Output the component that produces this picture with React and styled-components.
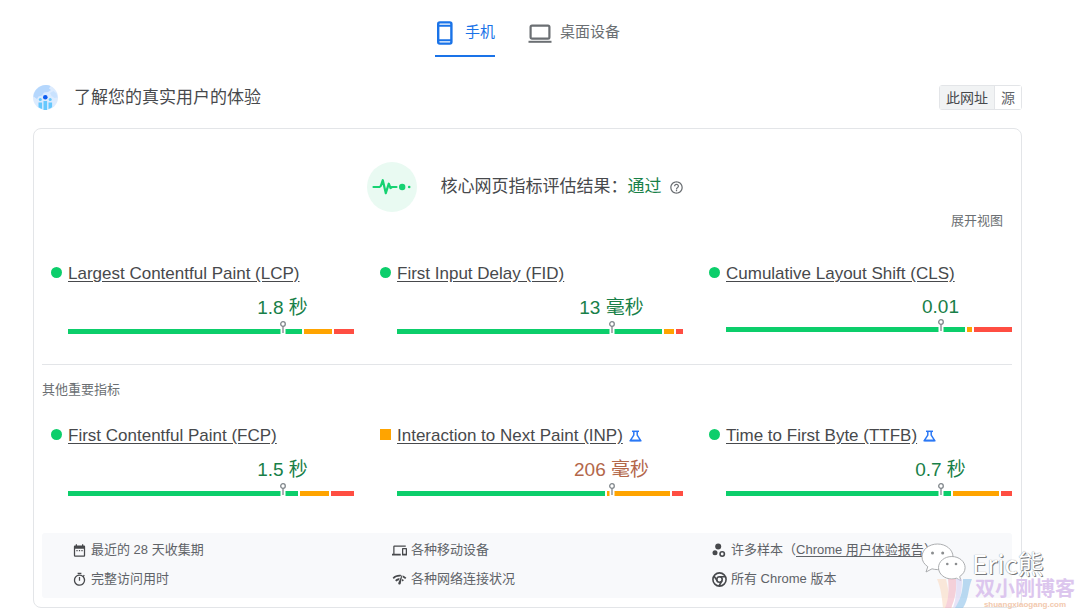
import React, { useState } from "react";
import styled, { createGlobalStyle } from "styled-components";
import {
  MdDateRange,
  MdDevices,
  MdHelpOutline,
  MdNetworkCheck,
  MdOutlineTimer,
} from "react-icons/md";

const coreMetrics = [
  { name: "Largest Contentful Paint (LCP)", value: "1.8 秒", parts: [236, 28, 20] },
  { name: "First Input Delay (FID)", value: "13 毫秒", parts: [267, 10, 7] },
  { name: "Cumulative Layout Shift (CLS)", value: "0.01", parts: [239, 5, 38], unitless: true },
];

const otherMetrics = [
  { name: "First Contentful Paint (FCP)", value: "1.5 秒", parts: [230, 29, 23] },
  {
    name: "Interaction to Next Paint (INP)",
    value: "206 毫秒",
    parts: [208, 63, 11],
    average: true,
    experimental: true,
  },
  {
    name: "Time to First Byte (TTFB)",
    value: "0.7 秒",
    parts: [225, 46, 11],
    experimental: true,
  },
];

const partColors = ["#0cce6b", "#ffa400", "#ff4e42"];

const PhoneIcon = () => (
  <svg width="20" height="24" viewBox="0 0 20 24" fill="none" stroke="currentColor">
    <rect x="3.2" y="1.4" width="13.2" height="21.2" rx="1.6" strokeWidth="2.4" />
    <path d="M3 4.700h13.400M3 19.300h13.400" strokeWidth="2" />
  </svg>
);

const LaptopIcon = () => (
  <svg width="24" height="24" viewBox="0 0 24 24" fill="none" stroke="currentColor">
    <rect x="2.6" y="4.600" width="18.800" height="13" rx="1.400" strokeWidth="2.200" />
    <path d="M.5 20.800h23" strokeWidth="2" />
  </svg>
);

const UsersIcon = () => (
  <svg width="25" height="25" viewBox="0 0 25 25">
    <circle cx="12.5" cy="12.5" r="12.5" fill="#dcebfe" />
    <path
      d="M1 8.500C3 3.500 7.500.3 12.500 0c2 .1 3.500.4 5 1l-1.500 2.500 2 1.500-3 2-4 .5-2 3-3.500 1L4 14 .4 11.500z"
      fill="#b5d7fd"
    />
    <path d="M17 8l3.500-2 3 2.500 1 4-3 .5-3-2z" fill="#c9e2fe" />
    <g fill="#66c8fd">
      <circle cx="7.300" cy="14.500" r="1.500" />
      <circle cx="17.200" cy="14.500" r="1.500" />
      <path d="M5.500 17.500h3.600v6.600a12.500 12.500 0 0 1-3.600-1.800z" />
      <path d="M10.500 16h3.600v8.900a12.500 12.500 0 0 1-3.600 0z" />
      <path d="M15.500 17.500h3.600v4.800a12.500 12.500 0 0 1-3.600 1.800z" />
    </g>
    <circle cx="12.300" cy="12.300" r="2.300" fill="#0b5cf0" />
  </svg>
);

const PulseIcon = () => (
  <svg width="50" height="50" viewBox="0 0 50 50">
    <circle cx="25" cy="25" r="25" fill="#e9faf2" />
    <path
      d="M6.500 25h6l1.300-1 2-5.800 3 13 3-9.500 1.700 4.300 1.500-1h4.500"
      fill="none"
      stroke="#16d272"
      strokeWidth="2.200"
      strokeLinecap="round"
      strokeLinejoin="round"
    />
    <circle cx="35.200" cy="25" r="3.200" fill="#16d272" />
    <circle cx="42.200" cy="25" r="1.300" fill="#16d272" />
  </svg>
);

const FlaskIcon = () => (
  <svg width="13" height="12" viewBox="0 0 13 12" fill="none" stroke="#2b78f5">
    <path d="M3 1.300h7" strokeWidth="1.500" />
    <path d="M4.800 1.500v3.600L1.300 10.600h10.400L8.200 5.100V1.500" strokeWidth="1.500" />
    <path d="M1.200 10.600h10.600" strokeWidth="1.800" />
  </svg>
);

const PinIcon = () => (
  <svg width="7" height="13" viewBox="0 0 7 13" fill="none" stroke="#80868b">
    <circle cx="3.500" cy="3" r="2.300" strokeWidth="1.300" fill="#fff" />
    <path d="M3.500 5.200V12" strokeWidth="1.300" />
  </svg>
);

const SamplesIcon = () => (
  <svg width="15" height="15" viewBox="0 0 15 15" fill="currentColor">
    <circle cx="6.200" cy="3.500" r="3" />
    <circle cx="3" cy="9.700" r="2.500" />
    <circle cx="10.200" cy="11" r="2.200" fill="none" stroke="currentColor" strokeWidth="1.600" />
  </svg>
);

const ChromeIcon = () => (
  <svg width="15" height="15" viewBox="0 0 15 15" fill="none" stroke="currentColor" strokeWidth="1.600">
    <circle cx="7.500" cy="7.500" r="6.600" />
    <circle cx="7.500" cy="7.500" r="2.700" />
    <path d="M7.500 4.800h6M5.200 8.900L2 4M9.800 8.900L7 14" />
  </svg>
);

const WechatIcon = () => (
  <svg width="46" height="40" viewBox="0 0 46 40" fill="#fff" stroke="#a3a5a7" strokeWidth="0.900">
    <path d="M16.500 1C7.800 1 1 6.700 1 13.800c0 4.100 2.200 7.500 5.800 9.900L5 29l6-3.200c1.900.5 3.500.8 5.500.8 8.600 0 15.500-5.700 15.500-12.800S25.100 1 16.500 1z" />
    <path d="M30.800 13.500c-7.400 0-13.300 5-13.300 11.200S23.400 36 30.800 36c1.500 0 3.100-.3 4.600-.8l4.500 2.500-1.200-4.200c3.300-2.100 5.400-5.200 5.400-8.800 0-6.200-6-11.200-13.300-11.200z" />
    <g fill="#8b8d8f" stroke="none">
      <circle cx="11.500" cy="10" r="1.500" />
      <circle cx="21.700" cy="10" r="1.500" />
      <circle cx="26.300" cy="21" r="1.300" />
      <circle cx="35" cy="21" r="1.300" />
    </g>
  </svg>
);

const BlogLogo = () => (
  <svg width="36" height="32" viewBox="0 0 36 32" opacity="0.600">
    <path d="M0 1h9l6 29H6C5 20 4 10 0 1z" fill="#fbdcc4" />
    <path d="M11 1h8c1 10-1 21-5 29H8c4-9 4-20 3-29z" fill="#f3b5c4" />
    <path d="M19 1h6c0 10-1 20-6 29h-3c3-9 4-19 3-29z" fill="#d9d3f3" />
    <path d="M26 1h9c-4 9-3 20-9 29h-8c6-9 8-19 8-29z" fill="#8fc3ea" />
  </svg>
);

const Metric = ({ metric }) => {
  return (
    <MetricItem>
      <Status $average={metric.average} />
      <div>
        <NameRow>
          <MetricName href="#">{metric.name}</MetricName>
          {metric.experimental && <FlaskIcon />}
        </NameRow>
        <ValueTrack>
          <Value $average={metric.average} $unitless={metric.unitless}>
            {metric.value}
          </Value>
        </ValueTrack>
        <Bar>
          {metric.parts.map((part, idx) => (
            <BarPart key={idx} $color={partColors[idx]} style={{ flexGrow: part }} />
          ))}
          <Pin>
            <PinIcon />
          </Pin>
        </Bar>
      </div>
    </MetricItem>
  );
};

const App = () => {
  const [device, setDevice] = useState("mobile");
  const [scope, setScope] = useState("url");

  return (
    <Page>
      <GlobalStyle />
      <Tabs>
        <Tab $active={device === "mobile"} $gap={10} onClick={() => setDevice("mobile")}>
          <PhoneIcon />
          手机
        </Tab>
        <Tab $active={device === "desktop"} $gap={8} onClick={() => setDevice("desktop")}>
          <LaptopIcon />
          桌面设备
        </Tab>
      </Tabs>

      <SectionHeader>
        <UsersIcon />
        <Title>了解您的真实用户的体验</Title>
        <Scope>
          <ScopeButton $active={scope === "url"} onClick={() => setScope("url")}>
            此网址
          </ScopeButton>
          <ScopeButton $active={scope === "origin"} onClick={() => setScope("origin")}>
            源
          </ScopeButton>
        </Scope>
      </SectionHeader>

      <Card>
        <Assessment>
          <PulseIcon />
          <Result>
            核心网页指标评估结果：<Passed>通过</Passed>
          </Result>
          <MdHelpOutline size={15} color="#6b6f73" />
        </Assessment>
        <ExpandButton>展开视图</ExpandButton>

        <MetricGrid>
          {coreMetrics.map((metric) => (
            <Metric key={metric.name} metric={metric} />
          ))}
        </MetricGrid>

        <Divider />
        <SubTitle>其他重要指标</SubTitle>

        <MetricGrid>
          {otherMetrics.map((metric) => (
            <Metric key={metric.name} metric={metric} />
          ))}
        </MetricGrid>

        <Details>
          <Detail>
            <MdDateRange size={15} />
            最近的 28 天收集期
          </Detail>
          <Detail>
            <MdDevices size={15} />
            各种移动设备
          </Detail>
          <Detail>
            <SamplesIcon />
            <span>
              许多样本（<ReportLink href="#">Chrome 用户体验报告</ReportLink>）
            </span>
          </Detail>
          <Detail>
            <MdOutlineTimer size={15} />
            完整访问用时
          </Detail>
          <Detail>
            <MdNetworkCheck size={15} />
            各种网络连接状况
          </Detail>
          <Detail>
            <ChromeIcon />
            所有 Chrome 版本
          </Detail>
        </Details>
      </Card>

      <Watermark>
        <Author>
          <WechatIcon />
          <AuthorName>Eric熊</AuthorName>
        </Author>
        <Blog>
          <BlogLogo />
          <BlogText>
            <BlogName>双小刚博客</BlogName>
            <BlogUrl>shuangxiaogang.com</BlogUrl>
          </BlogText>
        </Blog>
      </Watermark>
    </Page>
  );
};

const GlobalStyle = createGlobalStyle`
  * {
    box-sizing: border-box;
  }

  body {
    margin: 0;
    background-color: #fff;
    color: #47494c;
    font-family: "Liberation Sans", "Noto Sans CJK SC", sans-serif;
  }

  button {
    padding: 0;
    border: 0;
    background: none;
    color: inherit;
    font-family: inherit;
    cursor: pointer;
  }

  svg {
    flex-shrink: 0;
  }
`;

const Page = styled.main`
  position: relative;
  padding: 21px 58px 4px 33px;
`;

const Tabs = styled.nav`
  display: flex;
  justify-content: center;
  gap: 33px;
`;

const Tab = styled.button`
  display: flex;
  align-items: flex-start;
  gap: ${(props) => props.$gap}px;
  height: 36px;
  color: ${(props) => (props.$active ? "#1a73e8" : "#6b6f73")};
  font-size: 15px;
  line-height: 22px;
  background: ${(props) =>
    props.$active ? "linear-gradient(#1a73e8, #1a73e8) bottom / 100% 2px no-repeat" : "none"};
`;

const SectionHeader = styled.header`
  display: flex;
  align-items: center;
  gap: 16px;
  margin-top: 28px;
`;

const Title = styled.h1`
  flex: 1;
  margin: 0;
  font-size: 17px;
  font-weight: 400;
  line-height: 24px;
`;

const Scope = styled.div`
  display: flex;
  height: 25px;
  border: 1px solid #e3e5e8;
  border-radius: 3px;
`;

const ScopeButton = styled.button`
  padding: 0 6px;
  background-color: ${(props) => (props.$active ? "#f1f3f4" : "#fff")};
  color: ${(props) => (props.$active ? "#47494c" : "#5f6368")};
  font-size: 14px;
  line-height: 22px;

  & + & {
    border-left: 1px solid #e3e5e8;
  }
`;

const Card = styled.section`
  margin-top: 18px;
  padding: 33px 9px 9px 8px;
  border: 1px solid #e3e5e8;
  border-radius: 8px;
`;

const Assessment = styled.div`
  display: flex;
  justify-content: center;
  align-items: center;
  padding-right: 4px;
`;

const Result = styled.h2`
  margin: 0 7px 0 24px;
  font-size: 17px;
  font-weight: 400;
  line-height: 24px;
`;

const Passed = styled.span`
  color: #188048;
`;

const ExpandButton = styled.button`
  display: block;
  margin: 0 9px 0 auto;
  color: #6b6f73;
  font-size: 13px;
  line-height: 18px;
`;

const MetricGrid = styled.div`
  display: grid;
  grid-template-columns: repeat(3, 1fr);
  gap: 26px;
  padding-left: 9px;
  margin-top: 34px;

  h3 + & {
    margin-top: 27px;
  }
`;

const MetricItem = styled.div`
  display: grid;
  grid-template-columns: 11px 1fr;
  column-gap: 6px;
`;

const Status = styled.span`
  width: 11px;
  height: 11px;
  margin-top: 3px;
  border-radius: ${(props) => (props.$average ? "0" : "50%")};
  background-color: ${(props) => (props.$average ? "#ffa400" : "#0cce6b")};
`;

const NameRow = styled.div`
  display: flex;
  align-items: center;
  gap: 6px;
`;

const MetricName = styled.a`
  color: inherit;
  font-size: 17px;
  line-height: 20px;
  white-space: nowrap;
  text-underline-offset: 2px;
`;

/* The value is centred over the pin, which stands at 75% of the bar. */
const ValueTrack = styled.div`
  display: flex;
  justify-content: center;
  width: 50%;
  margin: 12px 0 9px 50%;
`;

const Value = styled.span`
  color: ${(props) => (props.$average ? "#b3674a" : "#188048")};
  font-size: 19px;
  line-height: ${(props) => (props.$unitless ? 22 : 24)}px;
`;

const Bar = styled.div`
  position: relative;
  display: flex;
  gap: 2px;
  height: 5px;
`;

const BarPart = styled.span`
  flex: 1 1 0;
  background-color: ${(props) => props.$color};
`;

const Pin = styled.span`
  position: absolute;
  bottom: 0;
  left: 75%;
  display: flex;
  justify-content: center;
  width: 5px;
  height: 5px;
  background-color: #fff;
  transform: translateX(-50%);

  svg {
    position: absolute;
    bottom: 0;
  }
`;

const Divider = styled.hr`
  height: 1px;
  margin: 30px 0 16px;
  border: 0;
  background-color: #e3e5e8;
`;

const SubTitle = styled.h3`
  margin: 0;
  color: #6b6f73;
  font-size: 13px;
  font-weight: 400;
  line-height: 18px;
`;

const Details = styled.div`
  display: grid;
  grid-template-columns: repeat(3, 1fr);
  gap: 9px 20px;
  margin-top: 37px;
  padding: 7px 0 9px 30px;
  border-radius: 3px;
  background-color: #f8f9fb;
`;

const Detail = styled.div`
  display: flex;
  align-items: center;
  gap: 4px;
  color: #5f6368;
  font-size: 13px;
  line-height: 20px;
  white-space: nowrap;

  svg {
    color: #47494c;
  }
`;

const ReportLink = styled.a`
  color: inherit;
  text-underline-offset: 2px;
`;

const Watermark = styled.div`
  position: absolute;
  right: 5px;
  bottom: 2px;
  width: 154px;
  pointer-events: none;
`;

const Author = styled.div`
  display: flex;
  align-items: center;
  gap: 5px;
  height: 30px;
`;

const AuthorName = styled.span`
  color: #fff;
  font-family: "Noto Sans CJK SC", sans-serif;
  font-size: 26px;
  line-height: 32px;
  text-shadow: 1px 1px 0 #77797b, 0 0 1px #77797b;
`;

const Blog = styled.div`
  display: flex;
  justify-content: flex-end;
  gap: 2px;
`;

const BlogText = styled.div`
  text-align: center;
`;

const BlogName = styled.div`
  color: #dcc6ee;
  font-size: 20px;
  font-weight: 700;
  line-height: 22px;
`;

const BlogUrl = styled.div`
  color: #f2c9ae;
  font-size: 8px;
  font-weight: 700;
  line-height: 10px;
`;

export default App;
